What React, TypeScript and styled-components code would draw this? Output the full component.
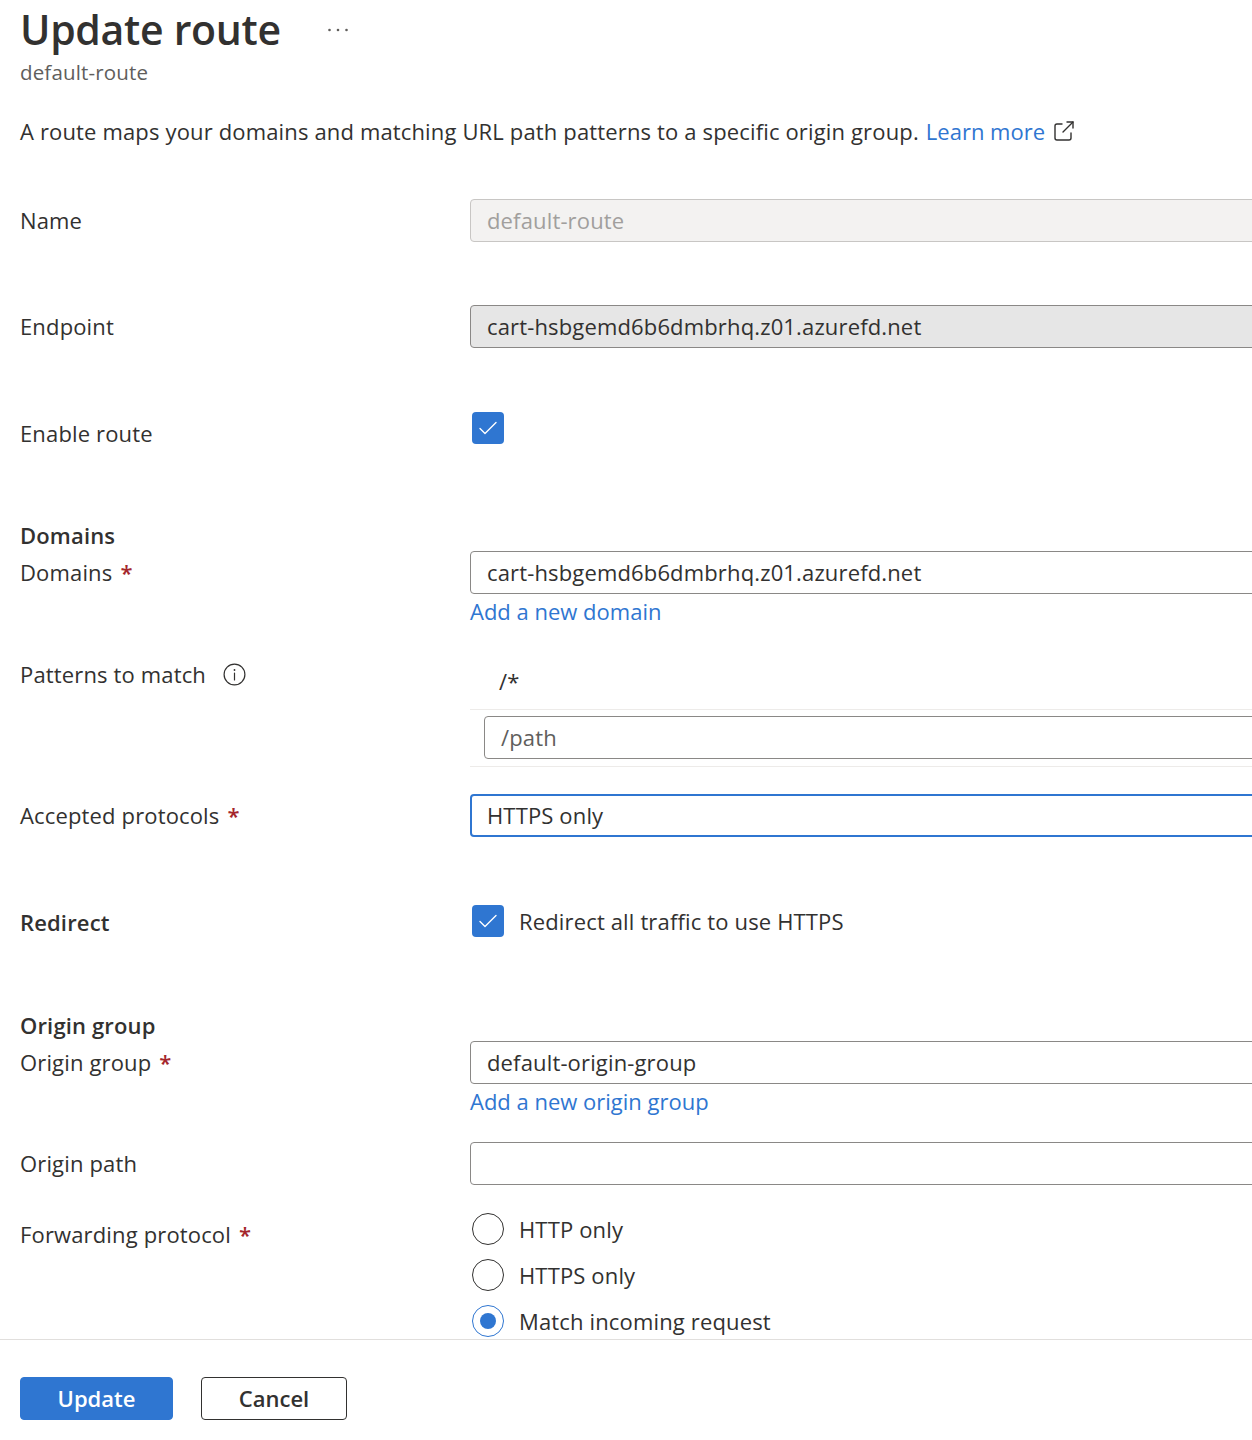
import React from 'react';
import styled, { createGlobalStyle } from 'styled-components';

const GlobalStyle = createGlobalStyle`
  html, body {
    margin: 0;
    padding: 0;
    background: #ffffff;
    overflow: hidden;
  }

  body {
    font-family: 'Open Sans', 'Noto Sans', Arial, sans-serif;
    color: #323130;
    letter-spacing: 0.15px;
  }
`;

const blue = '#2f76d1';

const Page = styled.div`
  width: 1252px;
  height: 1440px;
  display: flex;
  flex-direction: column;
  overflow: hidden;
`;

const Content = styled.div`
  height: 1339px;
  overflow: hidden;
  padding: 0 0 0 20px;
  box-sizing: border-box;
`;

const TitleRow = styled.div`
  display: flex;
  align-items: center;
  gap: 46px;
  height: 58px;
`;

const Title = styled.h1`
  margin: 0;
  font-size: 41px;
  font-weight: 600;
  line-height: 58px;
  letter-spacing: -0.3px;
`;

const MoreButton = styled.span`
  display: flex;
  color: #605e5c;
  margin-top: 2px;
`;

const Subtitle = styled.div`
  font-size: 20.5px;
  color: #605e5c;
  line-height: 28px;
`;

const Description = styled.p`
  margin: 30px 0 0;
  font-size: 22px;
  line-height: 30px;
  display: flex;
  align-items: center;
  gap: 7px;
`;

const Link = styled.a<{ $pad?: boolean }>`
  color: ${blue};
  text-decoration: none;
  font-size: 22px;
  line-height: 30px;
  letter-spacing: 0;
  padding-top: ${(p) => (p.$pad ? 2 : 0)}px;
  cursor: pointer;
`;

const Form = styled.div`
  width: 1400px;
  display: flex;
  flex-direction: column;
`;

const Row = styled.div<{ $top: number }>`
  display: grid;
  grid-template-columns: 450px 1fr;
  margin-top: ${(p) => p.$top}px;
`;

const Label = styled.div<{ $bold?: boolean }>`
  font-size: 22px;
  line-height: 43px;
  font-weight: ${(p) => (p.$bold ? 600 : 400)};
  display: flex;
  align-items: center;
  gap: 6px;
  height: 43px;
`;

const Required = styled.span`
  color: #a4262c;
  font-weight: 600;
  margin-left: 2px;
`;

const InfoSpacer = styled.span`
  width: 5px;
`;

const SectionHeading = styled.div<{ $top: number }>`
  margin-top: ${(p) => p.$top}px;
  font-size: 22px;
  font-weight: 600;
  line-height: 30px;
  height: 30px;
  margin-bottom: 1px;
`;

const Field = styled.div`
  display: flex;
  flex-direction: column;
`;

const TextBox = styled.div<{ $variant?: 'disabled' | 'readonly' | 'focused' }>`
  box-sizing: border-box;
  height: 43px;
  border-radius: 4px;
  font-size: 22px;
  line-height: 38px;
  display: flex;
  align-items: center;
  border: ${(p) =>
    p.$variant === 'focused'
      ? `2px solid ${blue}`
      : p.$variant === 'disabled'
        ? '1px solid #c8c6c4'
        : '1px solid #8a8886'};
  padding: 0 15px 2px ${(p) => (p.$variant === 'focused' ? 15 : 16)}px;
  background: ${(p) =>
    p.$variant === 'disabled' ? '#f3f2f1' : p.$variant === 'readonly' ? '#e6e6e6' : '#ffffff'};
  color: ${(p) => (p.$variant === 'disabled' ? '#a19f9d' : '#323130')};
`;

const Placeholder = styled.span`
  color: #605e5c;
`;

const PatternList = styled.div`
  display: flex;
  flex-direction: column;
`;

const PatternItem = styled.div`
  height: 57px;
  box-sizing: border-box;
  border-bottom: 1px solid #edebe9;
  display: flex;
  align-items: center;
  padding-left: 29px;
  font-size: 22px;
`;

const PatternInputRow = styled.div`
  height: 57px;
  box-sizing: border-box;
  border-bottom: 1px solid #edebe9;
  padding: 6px 0 0 14px;
`;

const CheckRow = styled.label<{ $offset?: number }>`
  display: flex;
  align-items: center;
  gap: 15px;
  height: 32px;
  padding-left: 2px;
  margin-top: ${(p) => p.$offset ?? 0}px;
  font-size: 22px;
`;

const CheckBox = styled.span`
  width: 32px;
  height: 32px;
  border-radius: 4px;
  background: ${blue};
  display: flex;
  align-items: center;
  justify-content: center;
  flex-shrink: 0;
`;

const RadioGroup = styled.div`
  display: flex;
  flex-direction: column;
  gap: 14px;
`;

const RadioCircle = styled.span<{ $checked?: boolean }>`
  width: 32px;
  height: 32px;
  box-sizing: border-box;
  border-radius: 50%;
  border: 1.5px solid ${(p) => (p.$checked ? blue : '#323130')};
  display: flex;
  align-items: center;
  justify-content: center;
  flex-shrink: 0;

  &::after {
    content: '';
    width: 16px;
    height: 16px;
    border-radius: 50%;
    background: ${blue};
    display: ${(p) => (p.$checked ? 'block' : 'none')};
  }
`;

const Footer = styled.div`
  flex: 1;
  border-top: 1px solid #e1dfdd;
  display: flex;
  gap: 28px;
  padding: 37px 0 0 20px;
  box-sizing: border-box;
`;

const Button = styled.button<{ $primary?: boolean }>`
  height: 43px;
  box-sizing: border-box;
  border-radius: 4px;
  font-family: inherit;
  font-size: 22px;
  font-weight: 600;
  padding: 0 0 2px;
  width: ${(p) => (p.$primary ? 153 : 146)}px;
  background: ${(p) => (p.$primary ? blue : '#ffffff')};
  color: ${(p) => (p.$primary ? '#ffffff' : '#323130')};
  border: 1px solid ${(p) => (p.$primary ? blue : '#323130')};
  cursor: pointer;
`;

const Check = () => (
  <svg width="20" height="16" viewBox="0 0 20 16" fill="none">
    <path d="M2 8.5 L7 13.5 L18 2.5" stroke="#ffffff" strokeWidth="1.4" strokeLinecap="round" strokeLinejoin="round" />
  </svg>
);

const Ellipsis = () => (
  <svg width="22" height="6" viewBox="0 0 22 6">
    <circle cx="2.5" cy="3" r="1.3" fill="currentColor" />
    <circle cx="11" cy="3" r="1.3" fill="currentColor" />
    <circle cx="19.5" cy="3" r="1.3" fill="currentColor" />
  </svg>
);

const ExternalIcon = () => (
  <svg width="24" height="24" viewBox="0 0 24 24" fill="none" stroke="#323130" strokeWidth="1.4" strokeLinecap="round" strokeLinejoin="round">
    <path d="M10 5 H5 a2 2 0 0 0 -2 2 V19 a2 2 0 0 0 2 2 H17 a2 2 0 0 0 2 -2 V14" />
    <path d="M11 13 L21 3" />
    <path d="M15 3 H21 V9" />
  </svg>
);

const InfoIcon = () => (
  <svg width="23" height="23" viewBox="0 0 23 23" fill="none" stroke="#323130" strokeWidth="1.2">
    <circle cx="11.5" cy="11.5" r="10.4" />
    <circle cx="11.5" cy="7" r="0.9" fill="#323130" stroke="none" />
    <path d="M11.5 10 V17" strokeLinecap="round" />
  </svg>
);

const forwarding = [
  { label: 'HTTP only', checked: false },
  { label: 'HTTPS only', checked: false },
  { label: 'Match incoming request', checked: true },
];

const App = () => (
  <Page>
    <GlobalStyle />
    <Content>
      <TitleRow>
        <Title>Update route</Title>
        <MoreButton>
          <Ellipsis />
        </MoreButton>
      </TitleRow>
      <Subtitle>default-route</Subtitle>
      <Description>
        A route maps your domains and matching URL path patterns to a specific origin group.
        <Link>Learn more</Link>
        <ExternalIcon />
      </Description>

      <Form>
        <Row $top={53}>
          <Label>Name</Label>
          <Field>
            <TextBox $variant="disabled">default-route</TextBox>
          </Field>
        </Row>

        <Row $top={63}>
          <Label>Endpoint</Label>
          <Field>
            <TextBox $variant="readonly">cart-hsbgemd6b6dmbrhq.z01.azurefd.net</TextBox>
          </Field>
        </Row>

        <Row $top={64}>
          <Label>Enable route</Label>
          <Field>
            <CheckRow>
              <CheckBox>
                <Check />
              </CheckBox>
            </CheckRow>
          </Field>
        </Row>

        <SectionHeading $top={65}>Domains</SectionHeading>
        <Row $top={0}>
          <Label>
            Domains<Required>*</Required>
          </Label>
          <Field>
            <TextBox>cart-hsbgemd6b6dmbrhq.z01.azurefd.net</TextBox>
            <Link $pad>Add a new domain</Link>
          </Field>
        </Row>

        <Row $top={27}>
          <Label>
            Patterns to match
            <InfoSpacer />
            <InfoIcon />
          </Label>
          <Field>
            <PatternList>
              <PatternItem>/*</PatternItem>
              <PatternInputRow>
                <TextBox>
                  <Placeholder>/path</Placeholder>
                </TextBox>
              </PatternInputRow>
            </PatternList>
          </Field>
        </Row>

        <Row $top={27}>
          <Label>
            Accepted protocols<Required>*</Required>
          </Label>
          <Field>
            <TextBox $variant="focused">HTTPS only</TextBox>
          </Field>
        </Row>

        <Row $top={64}>
          <Label $bold>Redirect</Label>
          <Field>
            <CheckRow $offset={4}>
              <CheckBox>
                <Check />
              </CheckBox>
              Redirect all traffic to use HTTPS
            </CheckRow>
          </Field>
        </Row>

        <SectionHeading $top={66}>Origin group</SectionHeading>
        <Row $top={0}>
          <Label>
            Origin group<Required>*</Required>
          </Label>
          <Field>
            <TextBox>default-origin-group</TextBox>
            <Link $pad>Add a new origin group</Link>
          </Field>
        </Row>

        <Row $top={26}>
          <Label>Origin path</Label>
          <Field>
            <TextBox />
          </Field>
        </Row>

        <Row $top={28}>
          <Label>
            Forwarding protocol<Required>*</Required>
          </Label>
          <Field>
            <RadioGroup>
              {forwarding.map((item) => (
                <CheckRow key={item.label}>
                  <RadioCircle $checked={item.checked} />
                  {item.label}
                </CheckRow>
              ))}
            </RadioGroup>
          </Field>
        </Row>
      </Form>
    </Content>
    <Footer>
      <Button $primary>Update</Button>
      <Button>Cancel</Button>
    </Footer>
  </Page>
);

export default App;
